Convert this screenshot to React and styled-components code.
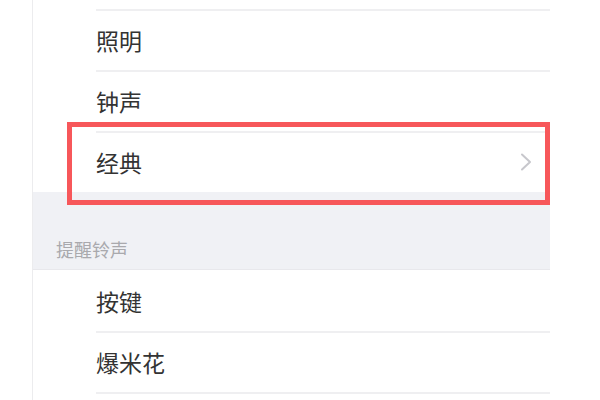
import React from "react";
import styled, { createGlobalStyle } from "styled-components";

const Global = createGlobalStyle`
  html, body { margin: 0; padding: 0; background: #ffffff; }
  body { font-family: "Noto Sans CJK SC", "Noto Sans", sans-serif; overflow: hidden; }
`;

const Page = styled.div`
  position: relative;
  width: 600px;
  height: 400px;
  padding-left: 32px;
  box-sizing: border-box;
  overflow: hidden;
`;

const Panel = styled.div`
  width: 518px;
  height: 400px;
  border-left: 1px solid #ececee;
  box-sizing: border-box;
  display: flex;
  flex-direction: column;
  overflow: hidden;
`;

const Group = styled.div`
  flex-shrink: 0;
  background: #ffffff;
  display: flex;
  flex-direction: column;
  padding-top: ${(p) => p.$top || 0}px;
`;

const Row = styled.div`
  flex-shrink: 0;
  position: relative;
  height: 61px;
  box-sizing: border-box;
  display: flex;
  align-items: center;
  justify-content: space-between;
  padding: 0 18px 0 63px;
  font-size: 23px;
  color: #333333;
  &::before {
    content: "";
    display: ${(p) => (p.$noLine ? "none" : "block")};
    position: absolute;
    left: 63px;
    right: 0;
    top: 0;
    height: 2px;
    background: #efeff1;
  }
`;

const Label = styled.span`
  line-height: 30px;
`;

const SectionHeader = styled.div`
  flex-shrink: 0;
  height: 78px;
  box-sizing: border-box;
  background: #f0f1f5;
  border-bottom: 1px solid #e8e8ec;
  display: flex;
  align-items: flex-end;
  padding: 0 0 10px 23px;
  font-size: 18px;
  line-height: 20px;
  color: #a9a9ad;
`;

const Highlight = styled.div`
  position: absolute;
  left: 67px;
  top: 122px;
  width: 483px;
  height: 83px;
  border: 5px solid #f7575a;
  box-sizing: border-box;
  pointer-events: none;
`;

const Chevron = () => (
  <svg width="12" height="18" viewBox="0 0 12 18" fill="none">
    <polyline points="2,1.5 10,9 2,16.5" stroke="#c7c7cc" strokeWidth="2" strokeLinecap="round" strokeLinejoin="round" />
  </svg>
);

export default function App() {
  return (
    <>
      <Global />
      <Page>
        <Panel>
          <Group $top={9}>
            <Row><Label>照明</Label></Row>
            <Row><Label>钟声</Label></Row>
            <Row><Label>经典</Label><Chevron /></Row>
          </Group>
          <SectionHeader>提醒铃声</SectionHeader>
          <Group>
            <Row $noLine><Label>按键</Label></Row>
            <Row><Label>爆米花</Label></Row>
            <Row />
          </Group>
        </Panel>
        <Highlight />
      </Page>
    </>
  );
}
